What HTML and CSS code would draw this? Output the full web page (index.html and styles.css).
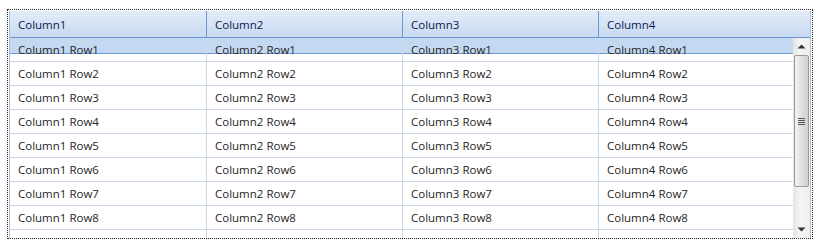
FILE: index.html
```html
<!DOCTYPE html>
<html>
<head>
<meta charset="utf-8">
<link rel="stylesheet" href="styles.css">
</head>
<body>
<div class="frame">
  <div class="grid">
    <div class="header">
      <div class="hcell">Column1</div>
      <div class="hcell">Column2</div>
      <div class="hcell">Column3</div>
      <div class="hcell last">Column4</div>
    </div>
    <div class="body">
      <div class="rows">
        <div class="row selected"><div class="cell">Column1 Row1</div><div class="cell">Column2 Row1</div><div class="cell">Column3 Row1</div><div class="cell">Column4 Row1</div></div>
        <div class="row"><div class="cell">Column1 Row2</div><div class="cell">Column2 Row2</div><div class="cell">Column3 Row2</div><div class="cell">Column4 Row2</div></div>
        <div class="row"><div class="cell">Column1 Row3</div><div class="cell">Column2 Row3</div><div class="cell">Column3 Row3</div><div class="cell">Column4 Row3</div></div>
        <div class="row"><div class="cell">Column1 Row4</div><div class="cell">Column2 Row4</div><div class="cell">Column3 Row4</div><div class="cell">Column4 Row4</div></div>
        <div class="row"><div class="cell">Column1 Row5</div><div class="cell">Column2 Row5</div><div class="cell">Column3 Row5</div><div class="cell">Column4 Row5</div></div>
        <div class="row"><div class="cell">Column1 Row6</div><div class="cell">Column2 Row6</div><div class="cell">Column3 Row6</div><div class="cell">Column4 Row6</div></div>
        <div class="row"><div class="cell">Column1 Row7</div><div class="cell">Column2 Row7</div><div class="cell">Column3 Row7</div><div class="cell">Column4 Row7</div></div>
        <div class="row"><div class="cell">Column1 Row8</div><div class="cell">Column2 Row8</div><div class="cell">Column3 Row8</div><div class="cell">Column4 Row8</div></div>
        <div class="row"><div class="cell"></div><div class="cell"></div><div class="cell"></div><div class="cell"></div></div>
      </div>
      <div class="scrollbar">
        <div class="arrow up"><svg width="9" height="5" viewBox="0 0 9 5"><path d="M4.5 0.5 L8.5 4.5 L0.5 4.5 Z" fill="#333"/></svg></div>
        <div class="track">
          <div class="thumb">
            <div class="grip"><span></span><span></span><span></span><span></span></div>
          </div>
        </div>
        <div class="arrow down"><svg width="9" height="5" viewBox="0 0 9 5"><path d="M0.5 0.5 L8.5 0.5 L4.5 4.5 Z" fill="#333"/></svg></div>
      </div>
    </div>
  </div>
</div>
</body>
</html>
```
FILE: styles.css
```css
html, body {
  margin: 0;
  padding: 0;
  background: #ffffff;
}
body {
  padding: 9px 0 0 7px;
  font-family: "Open Sans", "Noto Sans", sans-serif;
  font-size: 11.5px;
}
.frame {
  width: 804px;
  height: 228px;
  border: 1px dotted #222;
  padding: 0;
}
.grid {
  margin: 1px 0 0 1px;
  width: 802px;
  height: 227px;
  border-left: 1px solid #a9bcd8;
  border-right: 1px solid #a9bcd8;
  box-sizing: border-box;
  display: flex;
  flex-direction: column;
  overflow: hidden;
}
.header {
  display: flex;
  height: 27px;
  flex: none;
  box-sizing: border-box;
  border-bottom: 1px solid #6d97cf;
  background: linear-gradient(#e3ecf8, #c7daf1);
  color: #0f1850;
}
.hcell {
  width: 196px;
  flex: none;
  box-sizing: border-box;
  border-right: 1px solid #6d97cf;
  padding-left: 8px;
  display: flex;
  align-items: center;
}
.hcell:first-child,
.cell:first-child {
  width: 197px;
}
.hcell.last {
  flex: 1;
  border-right: none;
}
.body {
  flex: 1;
  display: flex;
  min-height: 0;
}
.rows {
  flex: 1;
  display: flex;
  flex-direction: column;
  overflow: hidden;
}
.row {
  display: flex;
  height: 24px;
  flex: none;
  box-sizing: border-box;
  border-bottom: 1px solid #c9d5ea;
  color: #262626;
}
.row.selected {
  background: linear-gradient(#c4d9f1 0, #c4d9f1 15px, #6d97cf 15px, #6d97cf 16px, #ffffff 16px);
}
.cell {
  width: 196px;
  flex: none;
  box-sizing: border-box;
  border-right: 1px solid #c9d5ea;
  padding-left: 8px;
  display: flex;
  align-items: center;
}
.cell:last-child {
  flex: 1;
  border-right: none;
}
.scrollbar {
  width: 17px;
  flex: none;
  display: flex;
  flex-direction: column;
  background: linear-gradient(90deg, #e4e4e4, #f4f4f4 40%, #eeeeee);
}
.arrow {
  height: 17px;
  flex: none;
  display: flex;
  align-items: center;
  justify-content: center;
}
.track {
  flex: 1;
  display: flex;
  flex-direction: column;
  padding: 0 1px;
}
.thumb {
  height: 132px;
  box-sizing: border-box;
  border: 1px solid #9a9a9a;
  border-radius: 2px;
  background: linear-gradient(90deg, #f2f2f2, #e0e0e0 50%, #cfcfcf);
  display: flex;
  align-items: center;
  justify-content: center;
}
.grip {
  display: flex;
  flex-direction: column;
  gap: 1px;
}
.grip span {
  display: block;
  width: 7px;
  height: 1px;
  background: #555;
}
```
